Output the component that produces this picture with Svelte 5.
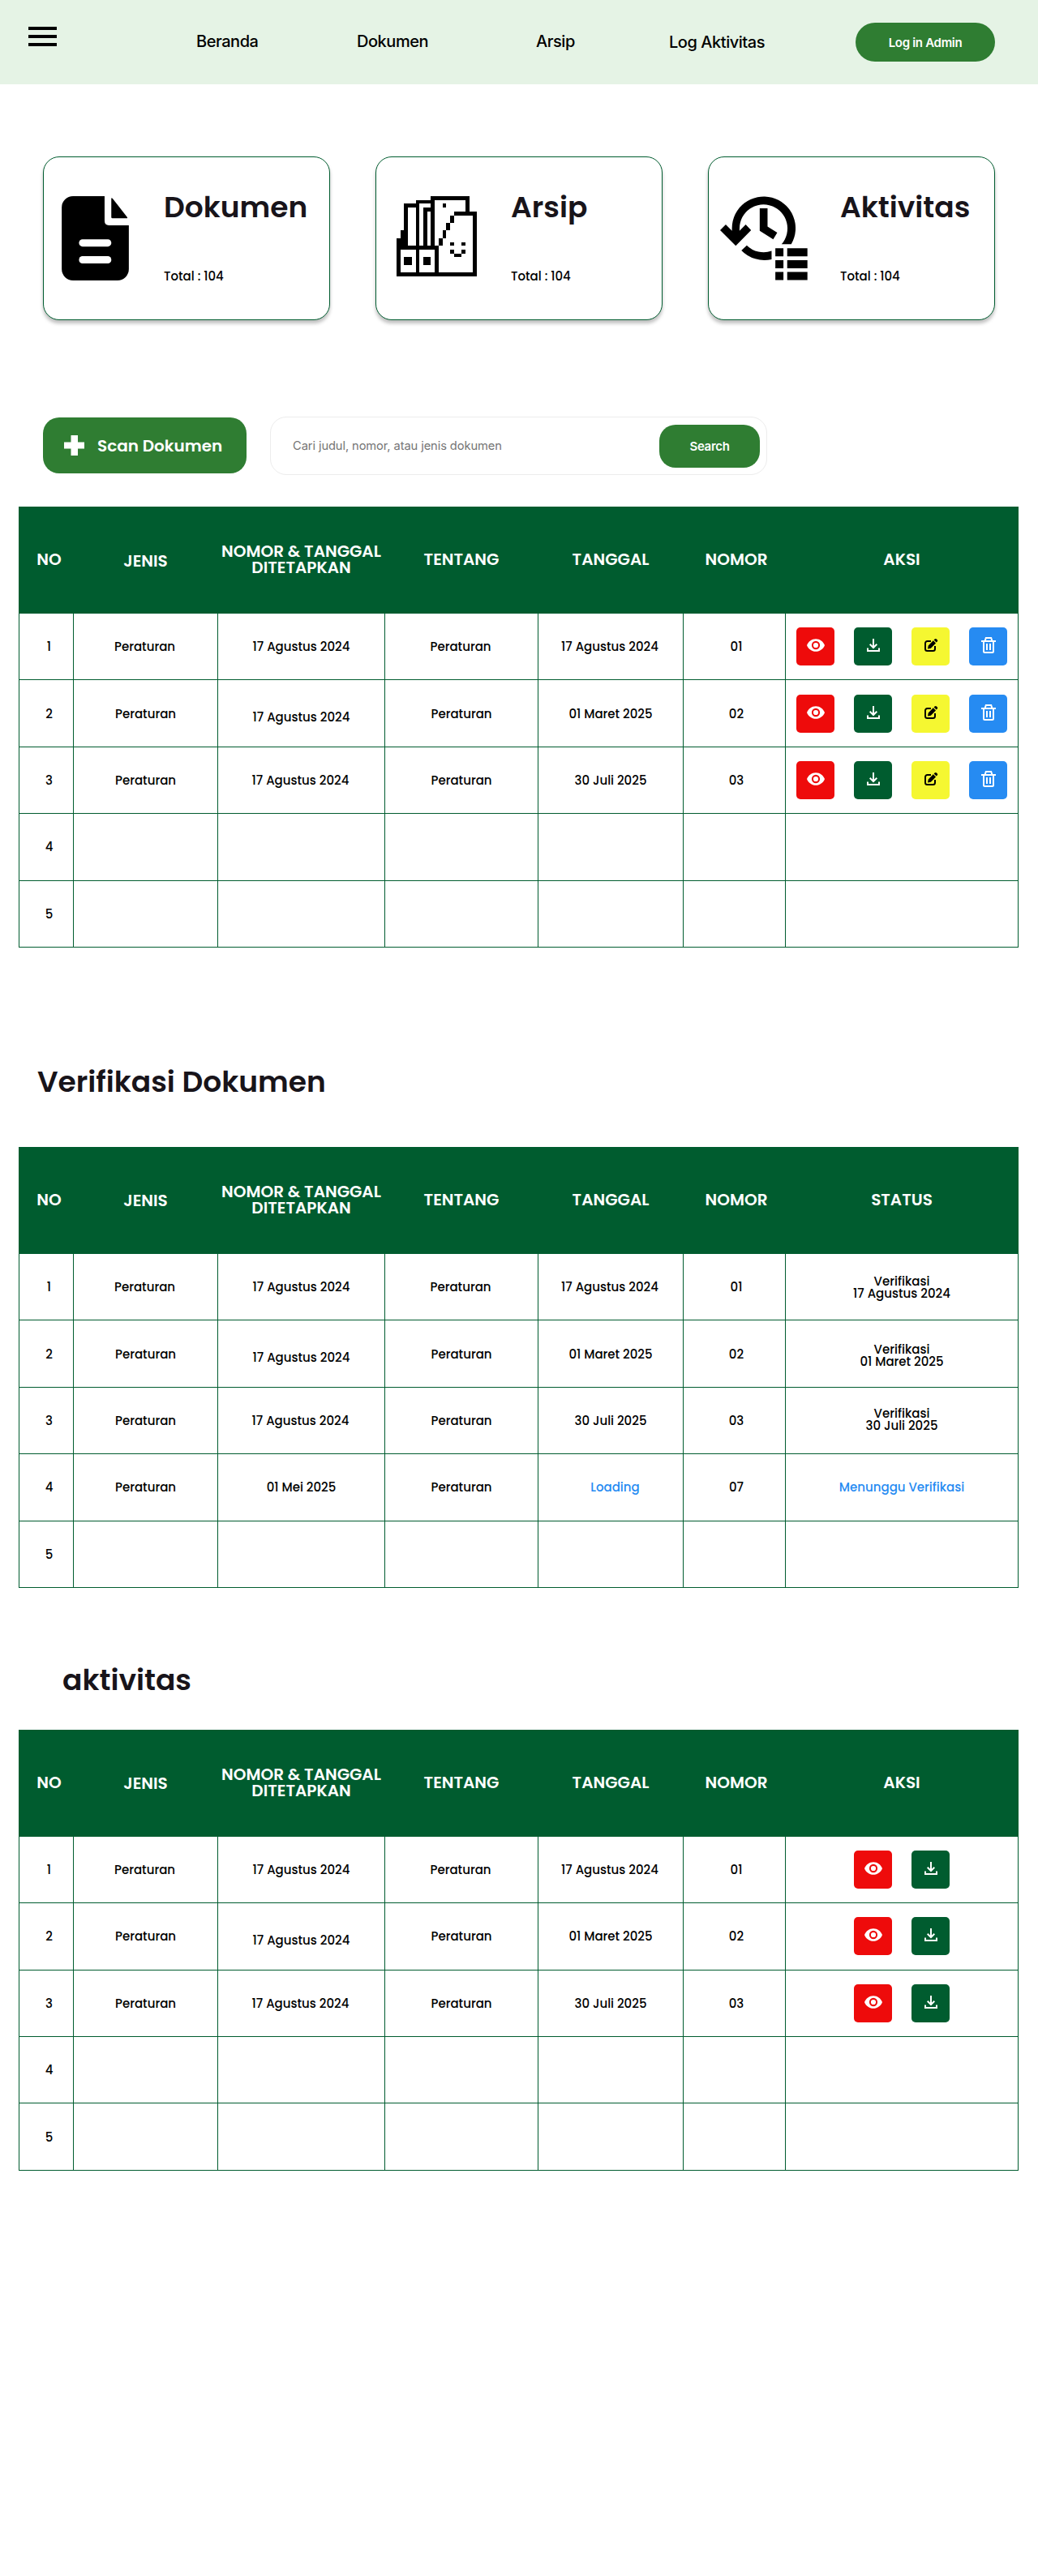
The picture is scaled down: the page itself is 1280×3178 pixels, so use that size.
<script>
  const archiveCells = [
    [9, 0, 10, 1], [18, 1, 1, 3], [9, 1, 1, 12], [5, 1, 4, 1], [5, 2, 1, 11], [2, 2, 3, 1],
    [2, 3, 1, 10], [7, 3, 2, 1], [7, 4, 1, 9], [12, 2, 1, 1], [15, 4, 6, 1], [20, 5, 1, 15],
    [14, 5, 1, 2], [13, 7, 1, 2], [12, 9, 1, 2], [11, 11, 1, 2], [1, 9, 1, 4], [0, 11, 1, 9],
    [1, 13, 10, 1], [0, 20, 21, 1], [5, 14, 1, 6], [10, 14, 1, 6], [2, 16, 2, 2], [7, 16, 2, 2],
    [14, 12, 1, 1], [17, 12, 1, 1], [14, 14, 1, 1], [17, 14, 1, 1], [15, 15, 2, 1]
  ];

  const base = [
    { no: '1', jenis: 'Peraturan', ditetapkan: '17 Agustus 2024', tentang: 'Peraturan', tanggal: '17 Agustus 2024', nomor: '01' },
    { no: '2', jenis: 'Peraturan', ditetapkan: '17 Agustus 2024', tentang: 'Peraturan', tanggal: '01 Maret 2025', nomor: '02' },
    { no: '3', jenis: 'Peraturan', ditetapkan: '17 Agustus 2024', tentang: 'Peraturan', tanggal: '30 Juli 2025', nomor: '03' }
  ];
  const all = ['view', 'download', 'edit', 'delete'];
  const read = ['view', 'download'];

  const documents = [...base.map((r) => ({ ...r, actions: all })), { no: '4' }, { no: '5' }];
  const verification = [
    ...base.map((r) => ({ ...r, verified: r.tanggal })),
    { no: '4', jenis: 'Peraturan', ditetapkan: '01 Mei 2025', tentang: 'Peraturan', tanggal: 'Loading', nomor: '07', pending: 'Menunggu Verifikasi' },
    { no: '5' }
  ];
  const activity = [...base.map((r) => ({ ...r, actions: read })), { no: '4' }, { no: '5' }];
</script>

{#snippet actionIcon(kind)}
  {#if kind === 'view'}
    <svg width="24" height="24" viewBox="0 0 24 24" fill="#fff">
      <path d="M12 4.2C7 4.2 2.73 7.4 1 12c1.73 4.6 6 7.8 11 7.8s9.27-3.2 11-7.8c-1.73-4.6-6-7.8-11-7.8zM12 17.2a5.1 5.2 0 1 1 0-10.4 5.1 5.2 0 0 1 0 10.4zm0-8.3a3.1 3.1 0 1 0 0 6.2 3.1 3.1 0 0 0 0-6.2z" />
    </svg>
  {:else if kind === 'download'}
    <svg width="24" height="24" viewBox="0 0 24 24" fill="none" stroke="#fff" stroke-width="2">
      <path d="M12 4v11M7.7 10.8 12 15l4.3-4.2M5 15.5V19h14v-3.5" />
    </svg>
  {:else if kind === 'edit'}
    <svg width="24" height="24" viewBox="0 0 24 24">
      <path d="M12 7H7.5A2.5 2.5 0 0 0 5 9.5v7A2.5 2.5 0 0 0 7.5 19h7a2.5 2.5 0 0 0 2.5-2.5V13" fill="none" stroke="#000" stroke-width="2" />
      <path d="M8 16.5l.7-4L14.8 6.3l3.2 3.2-6.1 6.2zM15.6 5.5l1-1a1.6 1.6 0 0 1 2.3 0l.8.8a1.6 1.6 0 0 1 0 2.3l-1 1z" fill="#000" />
    </svg>
  {:else}
    <svg width="24" height="24" viewBox="0 0 24 24" fill="none" stroke="#fff" stroke-width="2">
      <path d="M3 7h18M7.5 7l1.3-4h6.4l1.3 4M6 7v12.5A1.5 1.5 0 0 0 7.5 21h9a1.5 1.5 0 0 0 1.5-1.5V7M10 10v8M14 10v8" />
    </svg>
  {/if}
{/snippet}

{#snippet dataTable(rows, lastLabel)}
  <div class="table">
    <div class="row head">
      <div class="cell no">NO</div>
      <div class="cell jenis">JENIS</div>
      <div class="cell">NOMOR &amp; TANGGAL<br />DITETAPKAN</div>
      <div class="cell">TENTANG</div>
      <div class="cell">TANGGAL</div>
      <div class="cell nomor">NOMOR</div>
      <div class="cell">{lastLabel}</div>
    </div>
    {#each rows as row, i}
      <div class="row">
        <div class="cell no">{row.no}</div>
        <div class="cell" class:left={i === 0}>{row.jenis ?? ''}</div>
        <div class="cell" class:low={i === 1} class:left={i === 2}>{row.ditetapkan ?? ''}</div>
        <div class="cell" class:left={i === 0}>{row.tentang ?? ''}</div>
        <div class="cell" class:left={i === 0} class:pending={row.pending} class:shift={row.pending}>{row.tanggal ?? ''}</div>
        <div class="cell nomor">{row.nomor ?? ''}</div>
        <div
          class="cell"
          class:pending={row.pending}
          class:lower={row.verified && i === 1}
          class:higher={row.verified && i === 2}
        >
          {#if row.actions}
            <div class="actions">
              {#each row.actions as kind}
                <button class="action {kind}" aria-label={kind}>{@render actionIcon(kind)}</button>
              {/each}
            </div>
          {:else if row.verified}
            <span>Verifikasi<br />{row.verified}</span>
          {:else if row.pending}
            {row.pending}
          {/if}
        </div>
      </div>
    {/each}
  </div>
{/snippet}

<div class="page">
  <header>
    <svg class="menu" width="35" height="24" viewBox="0 0 35 24">
      <path d="M0 0h35v4H0zM0 10h35v4H0zM0 20h35v4H0z" />
    </svg>
    <nav>
      <a class="beranda" href="#beranda">Beranda</a>
      <a class="dokumen" href="#dokumen">Dokumen</a>
      <a class="arsip" href="#arsip">Arsip</a>
      <a class="log" href="#log">Log Aktivitas</a>
    </nav>
    <button class="login">Log in Admin</button>
  </header>

  <section class="cards">
    <article class="card doc">
      <svg width="83" height="104" viewBox="107 185 249 313">
        <path d="M149 185H266V277Q266 293 282 293H356V456A42 42 0 0 1 314 498H149A42 42 0 0 1 107 456V227A42 42 0 0 1 149 185Z" />
        <path d="M291 194Q291 189 296 194L350 263Q352 267 348 267H295Q291 267 291 263Z" />
        <rect x="171" y="345" width="120" height="27" rx="13" fill="#fff" />
        <rect x="171" y="408" width="120" height="27" rx="13" fill="#fff" />
      </svg>
      <div class="info"><h2>Dokumen</h2><p>Total : 104</p></div>
    </article>
    <article class="card archive">
      <svg width="99" height="99" viewBox="0 0 21 21" shape-rendering="crispEdges">
        {#each archiveCells as [x, y, w, h]}
          <rect {x} {y} width={w} height={h} />
        {/each}
      </svg>
      <div class="info"><h2>Arsip</h2><p>Total : 104</p></div>
    </article>
    <article class="card activity">
      <svg width="108" height="104" viewBox="82 187 325 312">
        <path d="M82 313L103 292L126 315V306A118 118 0 1 1 346 365H310A89 89 0 1 0 154 306V315L177 292L197 313L140 371Z" />
        <path d="M181 369A89 89 0 0 0 273 390V421A118 118 0 0 1 161 388Z" />
        <path d="M229 232H258V299L294 322L279 347L229 315Z" />
        <path d="M287 380h30v30h-30zM331 380h75v30h-75zM287 424h30v30h-30zM331 424h75v30h-75zM287 468h30v30h-30zM331 468h75v30h-75z" />
      </svg>
      <div class="info"><h2>Aktivitas</h2><p>Total : 104</p></div>
    </article>
  </section>

  <section class="tools">
    <button class="scan">
      <svg width="25" height="25" viewBox="0 0 25 25" fill="#fff"><path d="M8.5 0h8.500v8.500h8v8h-8V25H8.500v-8.500H0v-8h8.500z" /></svg>
      <span>Scan Dokumen</span>
    </button>
    <div class="search">
      <span class="placeholder">Cari judul, nomor, atau jenis dokumen</span>
      <button>Search</button>
    </div>
  </section>

  {@render dataTable(documents, 'AKSI')}
  <h2 class="title verify">Verifikasi Dokumen</h2>
  {@render dataTable(verification, 'STATUS')}
  <h2 class="title recent">aktivitas</h2>
  {@render dataTable(activity, 'AKSI')}
</div>

<style>
  :global(body) { margin: 0; background: #fff; }
  .page {
    box-sizing: border-box;
    width: 1280px;
    min-height: 3178px;
    font-family: Poppins, Inter, 'Liberation Sans', sans-serif;
    color: #000;
  }
  button { border: 0; padding: 0; font: inherit; color: #fff; }
  h2, p { margin: 0; }
  svg { display: block; flex: none; }

  header {
    display: flex;
    align-items: flex-start;
    box-sizing: border-box;
    height: 104px;
    padding: 28px 53px 0 35px;
    background: #e5f3e5;
    font-family: Inter, sans-serif;
  }
  .menu { margin-top: 5px; }
  nav { display: flex; flex: 1; padding-left: 172px; }
  nav a {
    box-sizing: border-box;
    padding-top: 11px;
    font-size: 20px;
    font-weight: 500;
    line-height: 24px;
    letter-spacing: -0.45px;
    color: #000;
    text-decoration: none;
    white-space: nowrap;
  }
  .beranda { width: 198px; }
  .dokumen { width: 221px; }
  .arsip { width: 164px; }
  nav .log { padding-top: 12px; }
  .login {
    width: 172px;
    height: 48px;
    border-radius: 24px;
    background: #2f7d32;
    font-size: 15px;
    font-weight: 600;
    letter-spacing: -0.3px;
  }

  .cards { display: flex; gap: 56px; padding: 89px 0 0 53px; }
  .card {
    display: flex;
    align-items: flex-start;
    box-sizing: border-box;
    width: 354px;
    height: 202px;
    padding-top: 48px;
    border: 1px solid #005c2f;
    border-radius: 20px;
    background: #fff;
    box-shadow: 0 4px 4px rgba(0, 0, 0, 0.25);
  }
  .doc { padding-left: 22px; gap: 43px; }
  .archive { padding-left: 25px; gap: 42px; }
  .activity { padding-left: 14px; gap: 40px; }
  .info { display: flex; flex-direction: column; gap: 61px; }
  .info h2, .title {
    font-size: 36px;
    font-weight: 600;
    line-height: 28px;
    color: #18141a;
    white-space: nowrap;
  }
  .info p { font-size: 15px; font-weight: 500; line-height: 20px; }

  .tools { display: flex; gap: 29px; padding: 119px 0 0 53px; }
  .scan {
    display: flex;
    align-items: center;
    gap: 16px;
    width: 251px;
    height: 69px;
    margin-top: 1px;
    padding-left: 26px;
    border-radius: 20px;
    background: #2f7d32;
    font-size: 20px;
    font-weight: 600;
    white-space: nowrap;
  }
  .search {
    display: flex;
    align-items: center;
    justify-content: space-between;
    box-sizing: border-box;
    width: 613px;
    height: 72px;
    padding: 0 8px 0 27px;
    border: 1px solid #ececec;
    border-radius: 20px;
    font-family: Inter, sans-serif;
  }
  .placeholder { font-size: 14.7px; color: #757575; letter-spacing: -0.1px; }
  .search button {
    width: 124px;
    height: 53px;
    border-radius: 20px;
    background: #2f7d32;
    font-size: 15px;
    font-weight: 600;
    letter-spacing: -0.3px;
  }

  .table { width: 1233px; margin: 39px 0 0 23px; font-size: 15px; font-weight: 500; line-height: 15px; }
  .row {
    display: grid;
    grid-template-columns: 67px 178px 206px 189px 179px 126px 288px;
    height: 82.4px;
  }
  .cell {
    display: grid;
    place-items: center;
    place-content: center;
    box-sizing: border-box;
    border-left: 1px solid #005c2f;
    border-bottom: 1px solid #005c2f;
    text-align: center;
  }
  .cell:last-child { border-right: 1px solid #005c2f; }
  .no { padding-left: 7px; }
  .nomor { padding-left: 5px; }
  .left { padding-right: 2px; }
  .low { padding-top: 9px; }
  .shift { padding-left: 11px; }
  .pending { color: #268bf2; }
  .lower { padding-top: 3px; }
  .higher { padding-bottom: 3px; }
  .head {
    height: 132px;
    background: #005c2f;
    color: #fff;
    font-size: 20px;
    font-weight: 600;
    line-height: 20px;
    white-space: nowrap;
  }
  .head .cell { padding-bottom: 1px; }
  .head .jenis { padding-bottom: 0; padding-top: 2px; }

  .actions { display: flex; gap: 24px; }
  .action {
    display: flex;
    align-items: flex-start;
    box-sizing: border-box;
    width: 47px;
    height: 47px;
    padding: 10px 0 0 12px;
    border-radius: 5px;
  }
  .view { background: #ee0b0b; }
  .download { background: #005c2f; }
  .edit { background: #f5f731; }
  .delete { background: #268bf2; }

  .verify { padding: 152px 0 0 46px; height: 55px; }
  .recent { padding: 100px 0 0 77px; height: 36px; }
</style>
